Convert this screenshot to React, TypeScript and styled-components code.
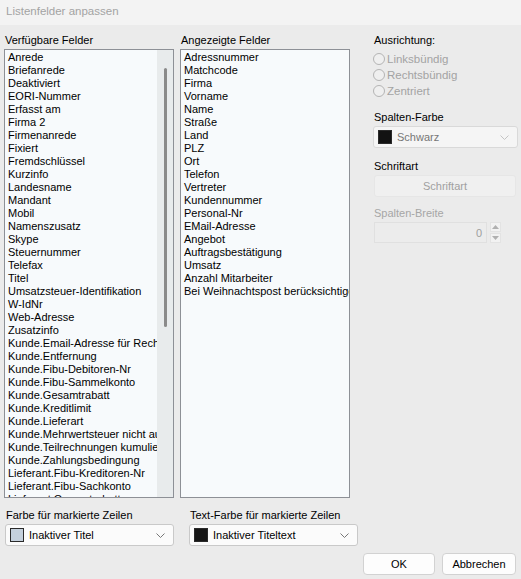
import React from "react";
import styled, { createGlobalStyle } from "styled-components";

const GlobalStyle = createGlobalStyle`
  html, body {
    margin: 0;
    padding: 0;
    background: #ebebeb;
  }
  body {
    font-family: "Liberation Sans", Arial, sans-serif;
    font-size: 11px;
    color: #000;
  }
`

const Window = styled.div`
  width: 521px;
  height: 579px;
  display: flex;
  flex-direction: column;
  background: #ebebeb;
  overflow: hidden;
`

const TitleBar = styled.div`
  height: 25px;
  flex: none;
  display: flex;
  align-items: center;
  padding-left: 6px;
  padding-bottom: 3px;
  box-sizing: border-box;
  background: #f3f3f3;
  color: #a3a3a3;
  font-size: 11.5px;
`

const Body = styled.div`
  flex: 1;
  display: flex;
  flex-direction: column;
  padding: 8px 4px 0 4px;
`

const TopRow = styled.div`
  display: grid;
  grid-template-columns: 170px 170px 145px;
  column-gap: 6px;
`

const Column = styled.div<{ $offset?: number }>`
  display: flex;
  flex-direction: column;
  margin-left: ${p => p.$offset || 0}px;
`

const Label = styled.div<{ $disabled?: boolean; $top?: number }>`
  height: 14px;
  line-height: 14px;
  margin: ${p => p.$top || 0}px 0 2px 1px;
  white-space: nowrap;
  color: ${p => (p.$disabled ? "#a6a6a6" : "#000")};
`

const ListBox = styled.div`
  position: relative;
  height: 449px;
  box-sizing: border-box;
  border: 1px solid #8d9096;
  background: #f7fafc;
  overflow: hidden;
  padding: 1px 0 0 3px;
`

const Item = styled.div`
  height: 13px;
  line-height: 13px;
  white-space: nowrap;
`

const ScrollTrack = styled.div`
  position: absolute;
  top: 0;
  right: 0;
  bottom: 0;
  width: 16px;
  background: #e8ebec;
`

const ScrollThumb = styled.div`
  position: absolute;
  top: 18px;
  left: 7px;
  width: 3px;
  height: 259px;
  border-radius: 2px;
  background: #8a8a8a;
`

const RadioList = styled.div`
  margin-top: 2px;
`

const RadioRow = styled.div`
  display: flex;
  align-items: center;
  height: 16px;
  color: #a3a3a3;
  font-size: 11.5px;
`

const RadioCircle = styled.span`
  width: 12px;
  height: 12px;
  box-sizing: border-box;
  border-radius: 50%;
  border: 1px solid #b4b4b4;
  background: #efefef;
  margin-right: 2px;
`

const Combo = styled.div<{ $width: number; $disabled?: boolean }>`
  width: ${p => p.$width}px;
  height: 22px;
  box-sizing: border-box;
  display: flex;
  align-items: center;
  padding: 0 8px 0 4px;
  border: 1px solid ${p => (p.$disabled ? "#d9d9d9" : "#c9c9c9")};
  border-radius: 3px;
  background: ${p => (p.$disabled ? "#f5f5f5" : "#fbfbfb")};
  color: ${p => (p.$disabled ? "#777" : "#000")};
  font-size: 11px;
`

const Swatch = styled.span<{ $color: string }>`
  width: 14px;
  height: 14px;
  box-sizing: border-box;
  border: 1px solid #2a2a2a;
  background: ${p => p.$color};
  margin-right: 5px;
  flex: none;
`

const ComboText = styled.span`
  flex: 1;
  white-space: nowrap;
`

const FlatButton = styled.div`
  width: 142px;
  height: 22px;
  margin-left: 1px;
  display: flex;
  align-items: center;
  justify-content: center;
  border-radius: 3px;
  background: #f0f0f0;
  border: 1px solid #e6e6e6;
  box-sizing: border-box;
  color: #a0a0a0;
`

const SpinRow = styled.div`
  display: flex;
  align-items: center;
  margin-left: 1px;
  gap: 3px;
`

const SpinInput = styled.div`
  width: 126px;
  height: 21px;
  box-sizing: border-box;
  border: 1px solid #e0e0e0;
  background: #ececec;
  color: #9e9e9e;
  display: flex;
  align-items: center;
  justify-content: flex-end;
  padding-right: 4px;
`

const SpinButtons = styled.div`
  display: flex;
  flex-direction: column;
  gap: 1px;
`

const SpinButton = styled.div`
  width: 11px;
  height: 10px;
  display: flex;
  align-items: center;
  justify-content: center;
  background: #f2f2f2;
  border: 1px solid #e3e3e3;
  box-sizing: border-box;
`

const BottomRow = styled.div`
  display: flex;
  margin-top: 10px;
  margin-left: 1px;
  gap: 15px;
`

const Field = styled.div`
  display: flex;
  flex-direction: column;
`

const Footer = styled.div`
  display: flex;
  justify-content: flex-end;
  gap: 7px;
  margin-top: 7px;
  padding-right: 1px;
`

const Button = styled.div<{ $width: number }>`
  width: ${p => p.$width}px;
  height: 22px;
  box-sizing: border-box;
  display: flex;
  align-items: center;
  justify-content: center;
  border: 1px solid #d2d2d2;
  border-radius: 4px;
  background: #fdfdfd;
`

const available = [
  "Anrede", "Briefanrede", "Deaktiviert", "EORI-Nummer", "Erfasst am", "Firma 2",
  "Firmenanrede", "Fixiert", "Fremdschlüssel", "Kurzinfo", "Landesname", "Mandant",
  "Mobil", "Namenszusatz", "Skype", "Steuernummer", "Telefax", "Titel",
  "Umsatzsteuer-Identifikation", "W-IdNr", "Web-Adresse", "Zusatzinfo",
  "Kunde.Email-Adresse für Rechnungen", "Kunde.Entfernung", "Kunde.Fibu-Debitoren-Nr",
  "Kunde.Fibu-Sammelkonto", "Kunde.Gesamtrabatt", "Kunde.Kreditlimit", "Kunde.Lieferart",
  "Kunde.Mehrwertsteuer nicht ausweisen", "Kunde.Teilrechnungen kumulieren",
  "Kunde.Zahlungsbedingung", "Lieferant.Fibu-Kreditoren-Nr", "Lieferant.Fibu-Sachkonto",
  "Lieferant.Gesamtrabatt"
]

const shown = [
  "Adressnummer", "Matchcode", "Firma", "Vorname", "Name", "Straße", "Land", "PLZ",
  "Ort", "Telefon", "Vertreter", "Kundennummer", "Personal-Nr", "EMail-Adresse",
  "Angebot", "Auftragsbestätigung", "Umsatz", "Anzahl Mitarbeiter",
  "Bei Weihnachtspost berücksichtigen"
]

const Chevron = ({ color }: { color: string }) => (
  <svg width="9" height="5" viewBox="0 0 9 5">
    <polyline points="0.5,0.5 4.5,4.5 8.5,0.5" fill="none" stroke={color} strokeWidth="1" />
  </svg>
)

const Triangle = ({ up }: { up?: boolean }) => (
  <svg width="7" height="4" viewBox="0 0 7 4">
    <polygon points={up ? "0,4 3.5,0 7,4" : "0,0 7,0 3.5,4"} fill="#b0b0b0" />
  </svg>
)

function App() {
  return (
    <Window>
      <GlobalStyle />
      <TitleBar>Listenfelder anpassen</TitleBar>
      <Body>
        <TopRow>
          <Column>
            <Label>Verfügbare Felder</Label>
            <ListBox>
              {available.map(name => <Item key={name}>{name}</Item>)}
              <ScrollTrack>
                <ScrollThumb />
              </ScrollTrack>
            </ListBox>
          </Column>
          <Column>
            <Label>Angezeigte Felder</Label>
            <ListBox>
              {shown.map(name => <Item key={name}>{name}</Item>)}
            </ListBox>
          </Column>
          <Column $offset={17}>
            <Label>Ausrichtung:</Label>
            <RadioList>
              {["Linksbündig", "Rechtsbündig", "Zentriert"].map(r => (
                <RadioRow key={r}>
                  <RadioCircle />
                  {r}
                </RadioRow>
              ))}
            </RadioList>
            <Label $top={11}>Spalten-Farbe</Label>
            <Combo $width={145} $disabled>
              <Swatch $color="#121212" />
              <ComboText>Schwarz</ComboText>
              <Chevron color="#c4c4c4" />
            </Combo>
            <Label $top={11}>Schriftart</Label>
            <FlatButton>Schriftart</FlatButton>
            <Label $top={9} $disabled>Spalten-Breite</Label>
            <SpinRow>
              <SpinInput>0</SpinInput>
              <SpinButtons>
                <SpinButton><Triangle up /></SpinButton>
                <SpinButton><Triangle /></SpinButton>
              </SpinButtons>
            </SpinRow>
          </Column>
        </TopRow>
        <BottomRow>
          <Field>
            <Label>Farbe für markierte Zeilen</Label>
            <Combo $width={169}>
              <Swatch $color="#c4d0dc" />
              <ComboText>Inaktiver Titel</ComboText>
              <Chevron color="#777" />
            </Combo>
          </Field>
          <Field>
            <Label>Text-Farbe für markierte Zeilen</Label>
            <Combo $width={169}>
              <Swatch $color="#161616" />
              <ComboText>Inaktiver Titeltext</ComboText>
              <Chevron color="#777" />
            </Combo>
          </Field>
        </BottomRow>
        <Footer>
          <Button $width={72}>OK</Button>
          <Button $width={74}>Abbrechen</Button>
        </Footer>
      </Body>
    </Window>
  )
}

export default App
